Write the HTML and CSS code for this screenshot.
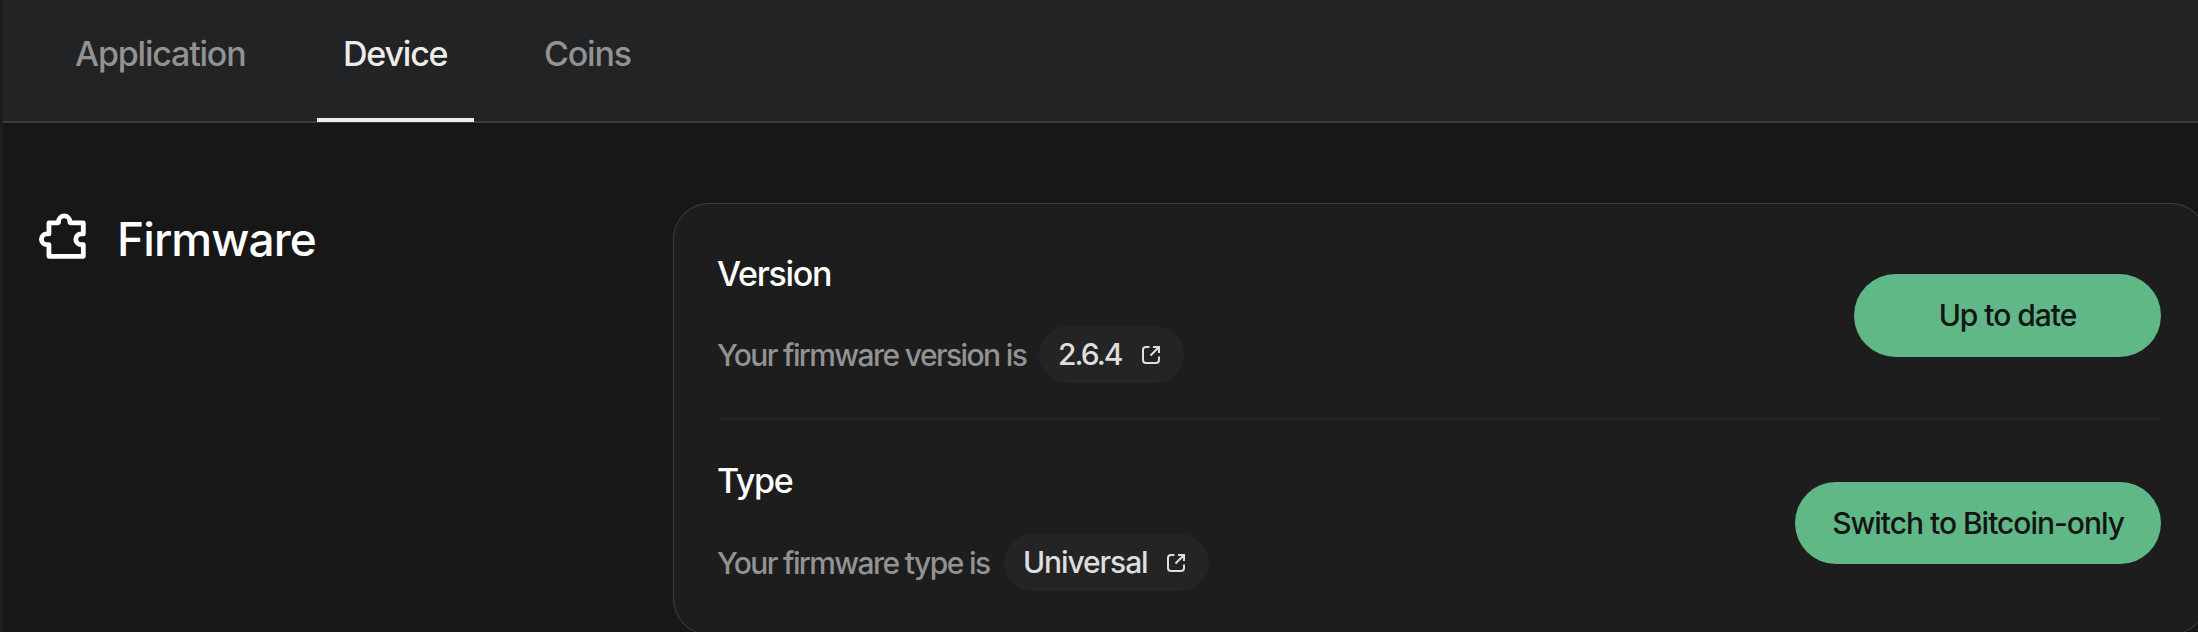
FILE: index.html
```html
<!DOCTYPE html>
<html lang="en">
<head>
<meta charset="utf-8">
<title>Device settings</title>
<link rel="stylesheet" href="styles.css">
</head>
<body>
<div class="app">
  <nav class="tabs">
    <a class="tab tab-application"><span>Application</span></a>
    <a class="tab tab-device active"><span>Device</span></a>
    <a class="tab tab-coins"><span>Coins</span></a>
  </nav>
  <main class="section">
    <header class="section-header">
      <svg class="puzzle" viewBox="0 0 48 48" fill="none" stroke="#fff" stroke-width="4.6" stroke-linejoin="round">
        <path d="M10.500 10.500H18.500Q19.800 10.500 19.800 9.200A5.400 5.400 0 0 1 30.600 9.200Q30.600 10.500 31.900 10.500H43.500V21H41.500A5.200 5.200 0 0 0 41.500 31.400H43.500V42.500H10.500V31.400H8.500A5.200 5.200 0 0 1 8.500 21H10.500Z"/>
      </svg>
      <h1><span>Firmware</span></h1>
    </header>
    <div class="card">
      <div class="row">
        <div class="info">
          <h2 class="t-version"><span>Version</span></h2>
          <div class="line"><p class="d-version"><span>Your firmware version is</span></p>
            <a class="pill pill-version"><span>2.6.4</span><svg class="ext" viewBox="0 0 20 20" fill="none" stroke="#dedede" stroke-width="2"><path d="M8.500 2H5Q2 2 2 5V15Q2 18 5 18H15Q18 18 18 15V11.500M9.500 10.500L17.500 2.500M12 2H18V8"/></svg></a>
          </div>
        </div>
        <button class="b-update"><span>Up to date</span></button>
      </div>
      <div class="row row-type">
        <div class="info">
          <h2 class="t-type"><span>Type</span></h2>
          <div class="line"><p class="d-type"><span>Your firmware type is</span></p>
            <a class="pill pill-type"><span>Universal</span><svg class="ext" viewBox="0 0 20 20" fill="none" stroke="#dedede" stroke-width="2"><path d="M8.500 2H5Q2 2 2 5V15Q2 18 5 18H15Q18 18 18 15V11.500M9.500 10.500L17.500 2.500M12 2H18V8"/></svg></a>
          </div>
        </div>
        <button class="b-switch"><span>Switch to Bitcoin-only</span></button>
      </div>
    </div>
  </main>
</div>
</body>
</html>
```
FILE: styles.css
```css
* { box-sizing: border-box; }
body { margin: 0; background: #171717; font-family: Inter, "Liberation Sans", sans-serif; font-weight: 500; overflow: hidden; }
h1, h2, p { margin: 0; font-weight: 500; white-space: nowrap; }
.app { width: 2198px; height: 632px; overflow: hidden; border-left: 3px solid #1d1d1d; }
.tabs { display: flex; height: 123px; background: #222325; border-bottom: 2px solid #3b3c3d; padding-left: 24px; gap: 22px; }
.tab { height: 122px; padding: 32px 0 0 48px; font-size: 34px; line-height: 44px; color: #929292; white-space: nowrap; letter-spacing: -1.2px; }
.tab-application { width: 268px; }
.tab-device { width: 157px; padding-left: 26px; }
.tab-coins { width: 157px; }
.tab.active { color: #ececec; border-bottom: 4px solid #ededf0; }
.section { display: flex; padding-top: 80px; }
.section-header { display: flex; flex: none; width: 670px; padding: 8px 0 0 35px; }
.puzzle { width: 50px; height: 50px; margin-top: 1px; }
h1 { margin-left: 29px; font-size: 46px; line-height: 56px; color: #fff; letter-spacing: -0.9px; }
.card { flex: none; width: 1534px; height: 432px; padding: 0 45px 0 44px; background: #1d1d1d; border: 1px solid #404040; border-radius: 36px; }
.row { display: flex; justify-content: space-between; height: 216px; padding-top: 48px; border-bottom: 2px solid #252525; }
.row-type { height: 210px; padding-top: 39px; border: 0; }
h2 { margin-left: -1px; font-size: 34px; line-height: 44px; color: #fff; letter-spacing: -1.3px; }
.line { display: flex; align-items: center; margin-top: 30px; height: 57px; }
.row-type .line { margin-top: 31px; }
.line p { margin-left: -1px; font-size: 30px; line-height: 38px; color: #929292; letter-spacing: -1.6px; }
.d-version { width: 322px; }
.d-type { width: 287px; }
.pill { display: flex; align-items: center; justify-content: space-between; height: 57px; padding: 0 23px 0 19px; border-radius: 29px; background: #242424; color: #dedede; font-size: 30px; letter-spacing: -1.1px; white-space: nowrap; }
.pill span { padding-bottom: 1px; }
.pill-version { width: 145px; letter-spacing: -2px; }
.pill-type { width: 205px; }
.ext { width: 20px; height: 20px; }
button { height: 83px; margin: 22px 0 0; padding: 0 0 2px; border: 0; border-radius: 42px; background: #60b887; color: #141414; font: 500 30px/38px Inter, sans-serif; letter-spacing: -1.03px; white-space: nowrap; }
.b-update { width: 307px; }
.b-switch { width: 366px; height: 82px; margin-top: 23px; padding-bottom: 1px; }
```
